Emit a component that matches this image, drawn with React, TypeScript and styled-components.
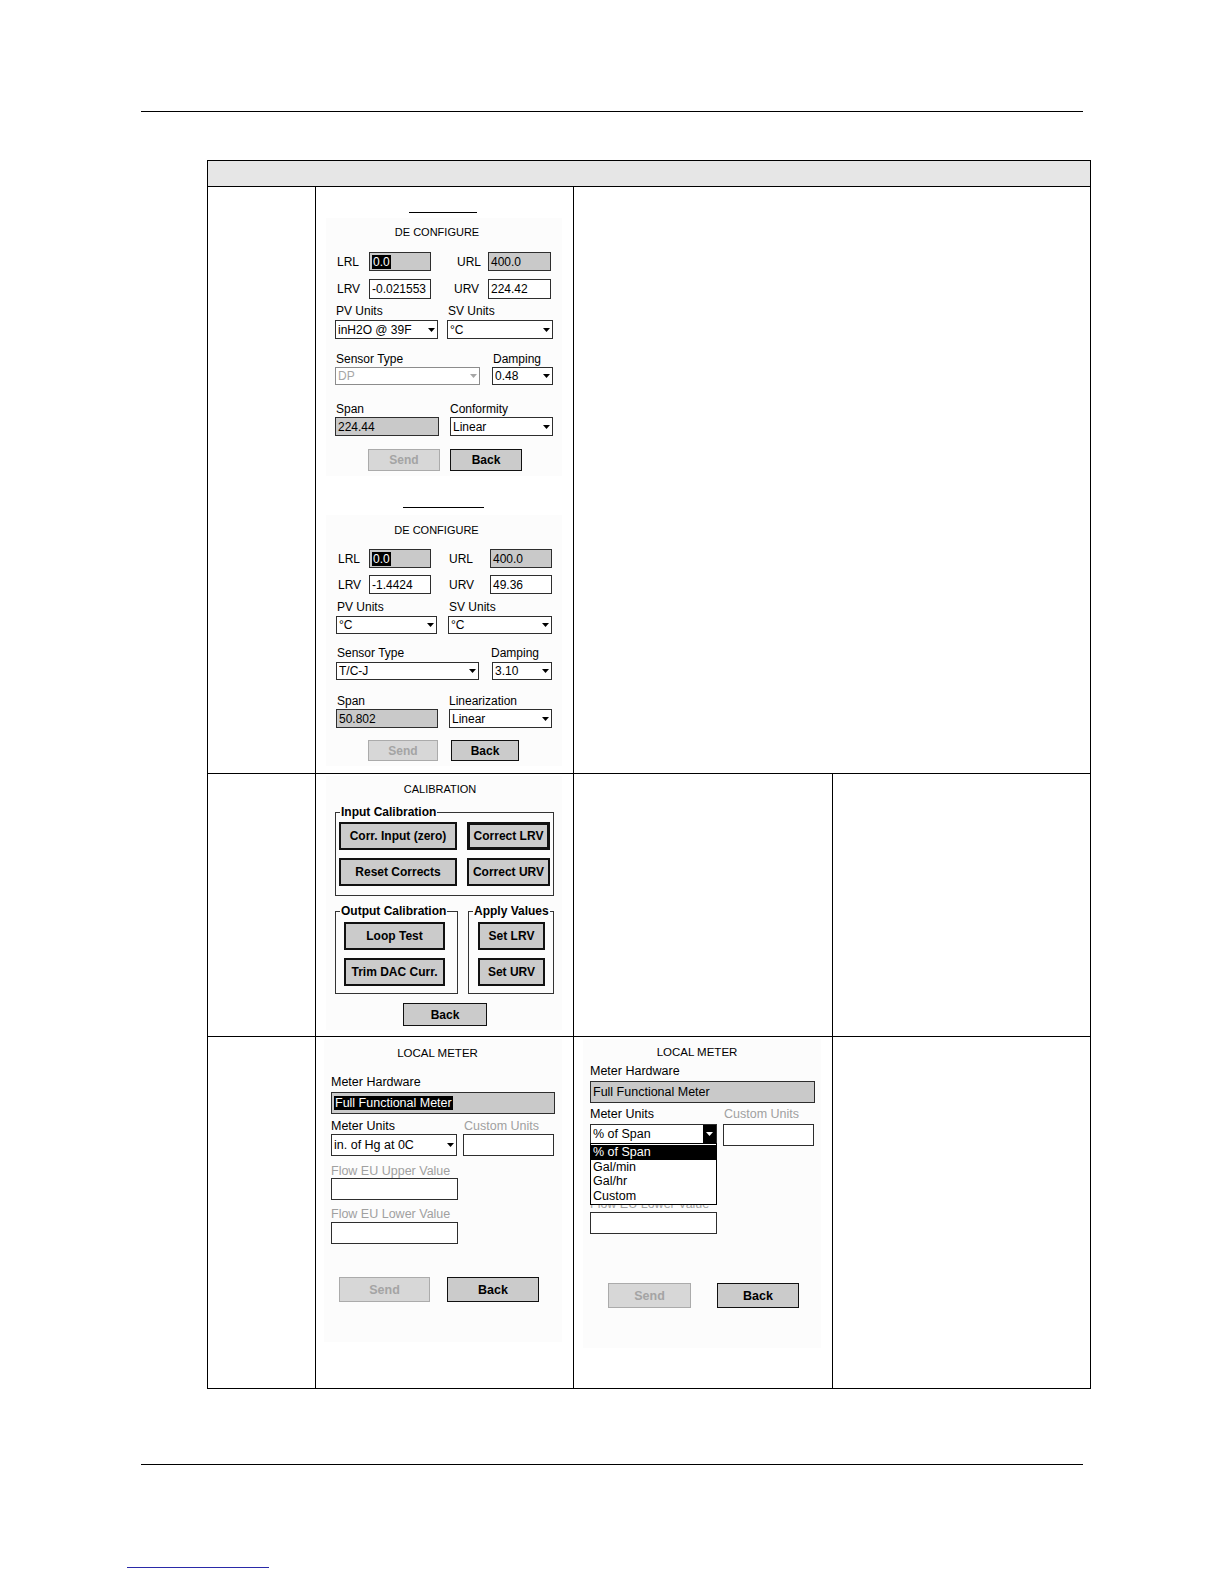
import React from "react";
import styled, { createGlobalStyle } from "styled-components";

const GlobalStyle = createGlobalStyle`
  html, body { margin: 0; padding: 0; background: #fff; }
  body { font-family: "Liberation Sans", Arial, sans-serif; color: #000; }
  * { box-sizing: border-box; }
`;

const Page = styled.div`
  width: 1224px;
  min-height: 1584px;
  display: flex;
  flex-direction: column;
  align-items: flex-start;
`;

const Rule = styled.div<{ $mt: number }>`
  margin: ${(p) => p.$mt}px 0 0 141px;
  width: 942px;
  height: 1px;
  background: #000;
`;

const FooterLink = styled.a`
  display: block;
  margin: 102px 0 0 127px;
  width: 142px;
  height: 1px;
  background: #2a2aa8;
`;

const Table = styled.div`
  margin: 48px 0 0 207px;
  width: 884px;
  display: grid;
  grid-template-columns: 107px 257px 258px 257px;
  grid-template-rows: 25px 586px 262px 351px;
  gap: 1px;
  padding: 1px;
  background: #000;
`;

const HeadCell = styled.div`
  grid-column: 1 / -1;
  background: #e6e6e6;
`;

const Cell = styled.div<{ $span?: number; $pl?: number }>`
  grid-column: span ${(p) => p.$span ?? 1};
  background: #fff;
  display: flex;
  flex-direction: column;
  align-items: flex-start;
  padding-left: ${(p) => p.$pl ?? 0}px;
`;

const CaptionRule = styled.div<{ $mt: number; $ml: number; $w: number }>`
  margin: ${(p) => p.$mt}px 0 0 ${(p) => p.$ml}px;
  width: ${(p) => p.$w}px;
  height: 1px;
  background: #000;
`;

const Screen = styled.div<{ $w: number; $pad: string; $mt?: number; $fs?: number }>`
  width: ${(p) => p.$w}px;
  margin-top: ${(p) => p.$mt ?? 0}px;
  padding: ${(p) => p.$pad};
  background: #fcfcfc;
  font-size: ${(p) => p.$fs ?? 12}px;
`;

const Title = styled.div<{ $pr: number; $lh?: number; $fs?: number }>`
  text-align: center;
  padding-right: ${(p) => p.$pr}px;
  font-size: ${(p) => p.$fs ?? 11}px;
  line-height: ${(p) => p.$lh ?? 16}px;
  white-space: nowrap;
`;

const Row = styled.div<{ $mt: number; $h: number; $top?: boolean }>`
  display: flex;
  align-items: ${(p) => (p.$top ? "flex-start" : "center")};
  margin-top: ${(p) => p.$mt}px;
  height: ${(p) => p.$h}px;
`;

const Lbl = styled.span<{ $w?: number; $pl?: number; $dim?: boolean }>`
  flex: none;
  width: ${(p) => (p.$w ? `${p.$w}px` : "auto")};
  padding-left: ${(p) => p.$pl ?? 0}px;
  color: ${(p) => (p.$dim ? "#a0a0a0" : "#000")};
  white-space: nowrap;
  line-height: 14px;
`;

const Box = styled.div<{ $w: number; $h?: number; $gray?: boolean; $ml?: number; $off?: boolean }>`
  flex: none;
  position: relative;
  width: ${(p) => p.$w}px;
  height: ${(p) => (p.$h ? `${p.$h}px` : "100%")};
  margin-left: ${(p) => p.$ml ?? 0}px;
  border: 1px solid ${(p) => (p.$off ? "#8c8c8c" : "#2e2e2e")};
  background: ${(p) => (p.$gray ? "#c9c9c9" : "#fff")};
  color: ${(p) => (p.$off ? "#a6a6a6" : "#000")};
  padding-left: 2px;
  display: flex;
  align-items: center;
  white-space: nowrap;
`;

const Sel = styled.span`
  background: #000;
  color: #fff;
  padding: 0 1px;
  line-height: 14px;
`;

const ComboText = styled.span`
  flex: 1;
  overflow: hidden;
`;

const ArrowSlot = styled.span<{ $pressed?: boolean }>`
  flex: none;
  align-self: stretch;
  width: ${(p) => (p.$pressed ? 13 : 12)}px;
  display: flex;
  align-items: center;
  justify-content: center;
  background: ${(p) => (p.$pressed ? "#000" : "transparent")};
`;

const DropList = styled.ul`
  position: absolute;
  top: 18px;
  left: -1px;
  width: 127px;
  margin: 0;
  padding: 1px 0;
  list-style: none;
  border: 1px solid #000;
  background: #fff;
  z-index: 2;
`;

const DropItem = styled.li<{ $active?: boolean }>`
  line-height: 14.5px;
  padding-left: 2px;
  background: ${(p) => (p.$active ? "#000" : "#fff")};
  color: ${(p) => (p.$active ? "#fff" : "#000")};
`;

const Btn = styled.button<{ $w: number; $ml?: number; $off?: boolean; $bw?: number; $fs?: number }>`
  flex: none;
  width: ${(p) => p.$w}px;
  height: 100%;
  margin-left: ${(p) => p.$ml ?? 0}px;
  padding: 0;
  border: ${(p) => p.$bw ?? 1}px solid ${(p) => (p.$off ? "#ababab" : "#111")};
  background: ${(p) => (p.$off ? "#d7d7d7" : "#cbcbcb")};
  color: ${(p) => (p.$off ? "#a4a4a4" : "#000")};
  font: bold ${(p) => p.$fs ?? 12}px "Liberation Sans", Arial, sans-serif;
  white-space: nowrap;
`;

const Group = styled.fieldset<{ $w: number; $h: number; $ml?: number }>`
  flex: none;
  width: ${(p) => p.$w}px;
  height: ${(p) => p.$h}px;
  margin: 0 0 0 ${(p) => p.$ml ?? 0}px;
  padding: 0;
  min-width: 0;
  border: 1px solid #333;
`;

const Legend = styled.legend`
  margin-left: 4px;
  padding: 0 1px;
  font-weight: bold;
  font-size: 12px;
  line-height: 15px;
  white-space: nowrap;
`;

const BtnGrid = styled.div<{ $cols: string; $mt: number; $ml: number }>`
  display: grid;
  grid-template-columns: ${(p) => p.$cols};
  grid-auto-rows: 28px;
  column-gap: 10px;
  row-gap: 8px;
  margin: ${(p) => p.$mt}px 0 0 ${(p) => p.$ml}px;
`;

const Arrow = ({ color = "#000" }: { color?: string }) => (
  <svg width="7" height="4" viewBox="0 0 7 4">
    <path d="M0 0h7L3.5 4z" fill={color} />
  </svg>
);

type ComboProps = {
  w: number;
  ml?: number;
  h?: number;
  off?: boolean;
  pressed?: boolean;
  children?: React.ReactNode;
  list?: React.ReactNode;
};

const Combo = ({ w, ml, h, off, pressed, children, list }: ComboProps) => (
  <Box $w={w} $ml={ml} $h={h} $off={off}>
    <ComboText>{children}</ComboText>
    <ArrowSlot $pressed={pressed}>
      <Arrow color={pressed ? "#fff" : off ? "#a6a6a6" : "#000"} />
    </ArrowSlot>
    {list}
  </Box>
);

const unitOptions = ["% of Span", "Gal/min", "Gal/hr", "Custom"];

const App = () => (
  <Page>
    <GlobalStyle />
    <Rule $mt={111} />
    <Table>
      <HeadCell />

      <Cell />
      <Cell $pl={10}>
        <CaptionRule $mt={25} $ml={83} $w={68} />
        <Screen $w={236} $pad="6px 0 5px 9px" $mt={5}>
          <Title $pr={23}>DE CONFIGURE</Title>
          <Row $mt={12} $h={19}>
            <Lbl $w={34} $pl={2}>LRL</Lbl>
            <Box $w={62} $gray><Sel>0.0</Sel></Box>
            <Lbl $w={57} $pl={26}>URL</Lbl>
            <Box $w={63} $gray>400.0</Box>
          </Row>
          <Row $mt={8} $h={20}>
            <Lbl $w={34} $pl={2}>LRV</Lbl>
            <Box $w={62}>-0.021553</Box>
            <Lbl $w={57} $pl={23}>URV</Lbl>
            <Box $w={63}>224.42</Box>
          </Row>
          <Row $mt={5} $h={14}>
            <Lbl $w={113} $pl={1}>PV Units</Lbl>
            <Lbl>SV Units</Lbl>
          </Row>
          <Row $mt={2} $h={19}>
            <Combo w={103}>inH2O @ 39F</Combo>
            <Combo w={106} ml={9}>°C</Combo>
          </Row>
          <Row $mt={13} $h={14}>
            <Lbl $w={158} $pl={1}>Sensor Type</Lbl>
            <Lbl>Damping</Lbl>
          </Row>
          <Row $mt={1} $h={18}>
            <Combo w={145} off>DP</Combo>
            <Combo w={61} ml={12}>0.48</Combo>
          </Row>
          <Row $mt={17} $h={14}>
            <Lbl $w={115} $pl={1}>Span</Lbl>
            <Lbl>Conformity</Lbl>
          </Row>
          <Row $mt={1} $h={19}>
            <Box $w={104} $gray>224.44</Box>
            <Combo w={103} ml={11}>Linear</Combo>
          </Row>
          <Row $mt={13} $h={22}>
            <Btn $w={72} $ml={33} $off>Send</Btn>
            <Btn $w={72} $ml={10}>Back</Btn>
          </Row>
        </Screen>

        <CaptionRule $mt={31} $ml={77} $w={81} />
        <Screen $w={236} $pad="7px 0 5px 10px" $mt={7}>
          <Title $pr={25}>DE CONFIGURE</Title>
          <Row $mt={11} $h={19}>
            <Lbl $w={33} $pl={2}>LRL</Lbl>
            <Box $w={62} $gray><Sel>0.0</Sel></Box>
            <Lbl $w={59} $pl={18}>URL</Lbl>
            <Box $w={62} $gray>400.0</Box>
          </Row>
          <Row $mt={7} $h={19}>
            <Lbl $w={33} $pl={2}>LRV</Lbl>
            <Box $w={62}>-1.4424</Box>
            <Lbl $w={59} $pl={18}>URV</Lbl>
            <Box $w={62}>49.36</Box>
          </Row>
          <Row $mt={6} $h={14}>
            <Lbl $w={113} $pl={1}>PV Units</Lbl>
            <Lbl>SV Units</Lbl>
          </Row>
          <Row $mt={2} $h={18}>
            <Combo w={101}>°C</Combo>
            <Combo w={104} ml={11}>°C</Combo>
          </Row>
          <Row $mt={12} $h={14}>
            <Lbl $w={155} $pl={1}>Sensor Type</Lbl>
            <Lbl>Damping</Lbl>
          </Row>
          <Row $mt={2} $h={18}>
            <Combo w={143}>T/C-J</Combo>
            <Combo w={60} ml={13}>3.10</Combo>
          </Row>
          <Row $mt={14} $h={14}>
            <Lbl $w={113} $pl={1}>Span</Lbl>
            <Lbl>Linearization</Lbl>
          </Row>
          <Row $mt={1} $h={19}>
            <Box $w={102} $gray>50.802</Box>
            <Combo w={103} ml={11}>Linear</Combo>
          </Row>
          <Row $mt={12} $h={21}>
            <Btn $w={70} $ml={32} $off>Send</Btn>
            <Btn $w={68} $ml={13}>Back</Btn>
          </Row>
        </Screen>
      </Cell>
      <Cell $span={2} />

      <Cell />
      <Cell $pl={10}>
        <Screen $w={236} $pad="6px 0 4px 9px" $mt={2}>
          <Title $pr={17} $lh={14}>CALIBRATION</Title>
          <Row $mt={9} $h={91} $top>
            <Group $w={219} $h={91}>
              <Legend>Input Calibration</Legend>
              <BtnGrid $cols="118px 83px" $mt={2} $ml={3}>
                <Btn $w={118} $bw={2}>Corr. Input (zero)</Btn>
                <Btn $w={83} $bw={3}>Correct LRV</Btn>
                <Btn $w={118} $bw={2}>Reset Corrects</Btn>
                <Btn $w={83} $bw={2}>Correct URV</Btn>
              </BtnGrid>
            </Group>
          </Row>
          <Row $mt={8} $h={90} $top>
            <Group $w={123} $h={90}>
              <Legend>Output Calibration</Legend>
              <BtnGrid $cols="101px" $mt={3} $ml={8}>
                <Btn $w={101} $bw={2}>Loop Test</Btn>
                <Btn $w={101} $bw={2}>Trim DAC Curr.</Btn>
              </BtnGrid>
            </Group>
            <Group $w={86} $h={90} $ml={10}>
              <Legend>Apply Values</Legend>
              <BtnGrid $cols="67px" $mt={3} $ml={9}>
                <Btn $w={67} $bw={2}>Set LRV</Btn>
                <Btn $w={67} $bw={2}>Set URV</Btn>
              </BtnGrid>
            </Group>
          </Row>
          <Row $mt={9} $h={23}>
            <Btn $w={84} $ml={68}>Back</Btn>
          </Row>
        </Screen>
      </Cell>
      <Cell />
      <Cell />

      <Cell />
      <Cell $pl={8}>
        <Screen $w={238} $pad="7px 0 40px 7px" $mt={2} $fs={12.5}>
          <Title $pr={18} $lh={14} $fs={11.5}>LOCAL METER</Title>
          <Row $mt={15} $h={14}>
            <Lbl>Meter Hardware</Lbl>
          </Row>
          <Row $mt={3} $h={22}>
            <Box $w={224} $gray><Sel>Full Functional Meter</Sel></Box>
          </Row>
          <Row $mt={5} $h={14}>
            <Lbl $w={133}>Meter Units</Lbl>
            <Lbl $dim>Custom Units</Lbl>
          </Row>
          <Row $mt={1} $h={22}>
            <Combo w={126}>in. of Hg at 0C</Combo>
            <Box $w={91} $ml={6} />
          </Row>
          <Row $mt={8} $h={14}>
            <Lbl $dim>Flow EU Upper Value</Lbl>
          </Row>
          <Row $mt={0} $h={22}>
            <Box $w={127} />
          </Row>
          <Row $mt={7} $h={14}>
            <Lbl $dim>Flow EU Lower Value</Lbl>
          </Row>
          <Row $mt={1} $h={22}>
            <Box $w={127} />
          </Row>
          <Row $mt={33} $h={25}>
            <Btn $w={91} $ml={8} $off $fs={12.5}>Send</Btn>
            <Btn $w={92} $ml={17} $fs={12.5}>Back</Btn>
          </Row>
        </Screen>
      </Cell>
      <Cell $pl={9}>
        <Screen $w={238} $pad="6px 0 40px 7px" $mt={2} $fs={12.5}>
          <Title $pr={17} $lh={14} $fs={11.5}>LOCAL METER</Title>
          <Row $mt={5} $h={14}>
            <Lbl>Meter Hardware</Lbl>
          </Row>
          <Row $mt={3} $h={22}>
            <Box $w={225} $gray>Full Functional Meter</Box>
          </Row>
          <Row $mt={4} $h={14}>
            <Lbl $w={134}>Meter Units</Lbl>
            <Lbl $dim>Custom Units</Lbl>
          </Row>
          <Row $mt={3} $h={22} $top>
            <Combo
              w={127}
              h={20}
              pressed
              list={
                <DropList>
                  {unitOptions.map((o, i) => (
                    <DropItem key={o} $active={i === 0}>{o}</DropItem>
                  ))}
                </DropList>
              }
            >
              % of Span
            </Combo>
            <Box $w={91} $ml={6} />
          </Row>
          {/* rows hidden behind the open list */}
          <Row $mt={5} $h={14} />
          <Row $mt={0} $h={22}>
            <Box $w={127} />
          </Row>
          <Row $mt={10} $h={14}>
            <Lbl $dim>Flow EU Lower Value</Lbl>
          </Row>
          <Row $mt={1} $h={22}>
            <Box $w={127} />
          </Row>
          <Row $mt={49} $h={25}>
            <Btn $w={83} $ml={18} $off $fs={12.5}>Send</Btn>
            <Btn $w={82} $ml={26} $fs={12.5}>Back</Btn>
          </Row>
        </Screen>
      </Cell>
      <Cell />
    </Table>
    <Rule $mt={75} />
    <FooterLink href="#" aria-label="link" />
  </Page>
);

export default App;
